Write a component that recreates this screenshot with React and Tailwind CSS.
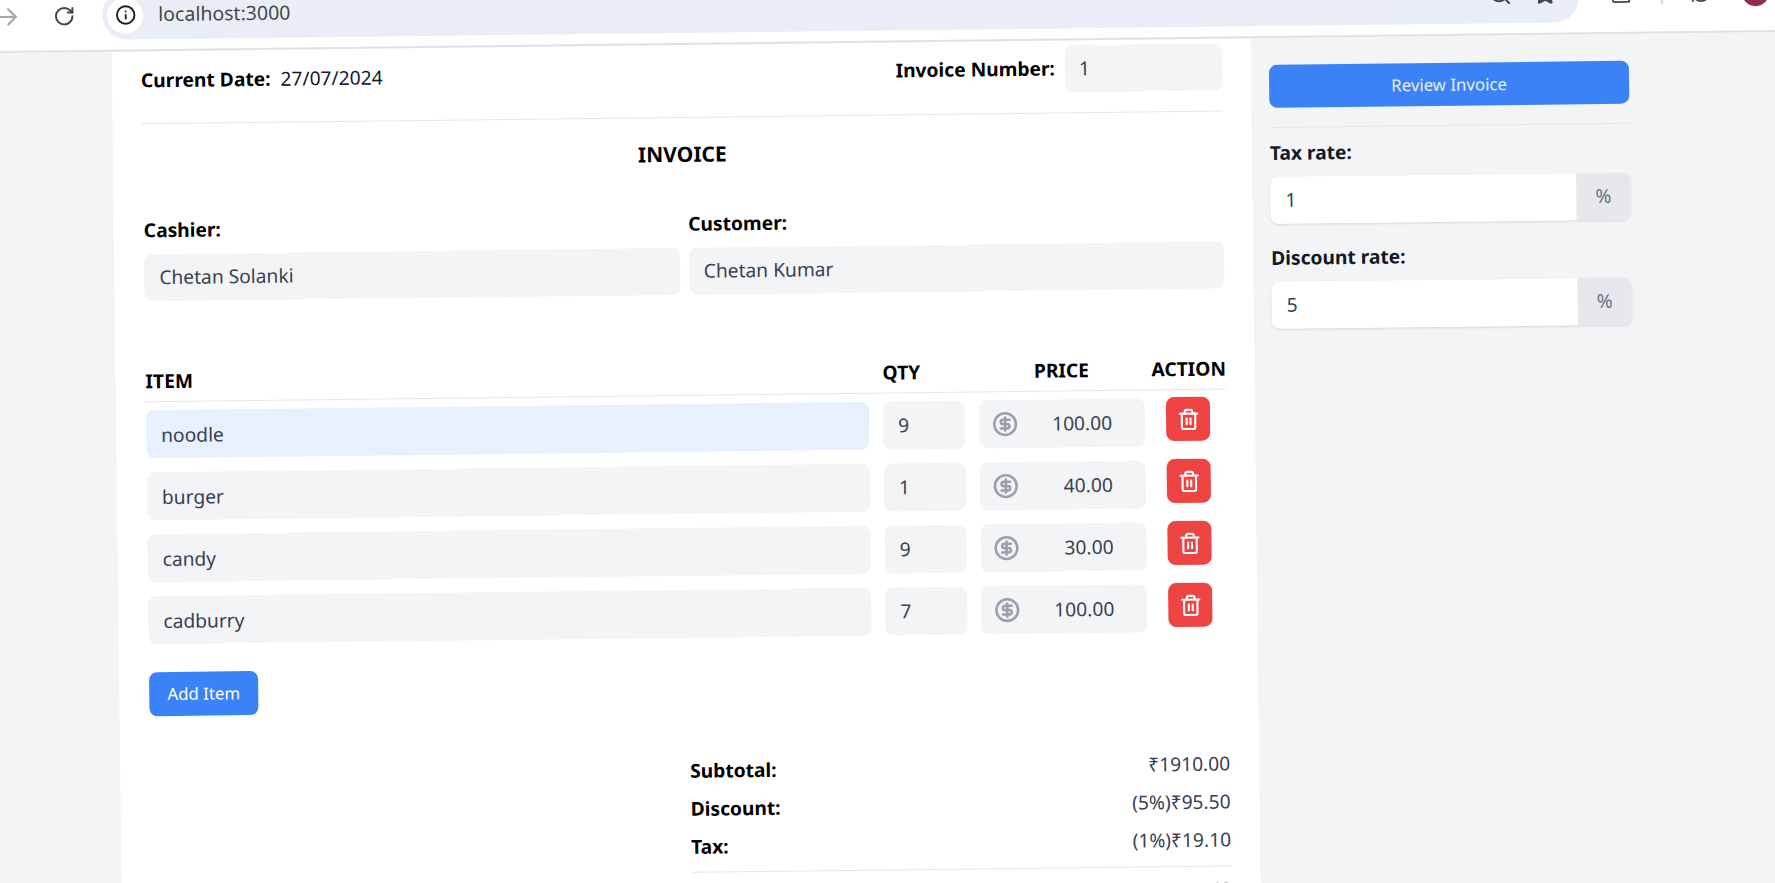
import React from 'react';
import { ArrowRight, RotateCw, Info, Search, Star, Square, RefreshCw, Trash2, CircleDollarSign } from 'lucide-react';

const items = [
    { name: 'noodle', qty: 9, price: '100.00', active: true },
    { name: 'burger', qty: 1, price: '40.00' },
    { name: 'candy', qty: 9, price: '30.00' },
    { name: 'cadburry', qty: 7, price: '100.00' },
];

const Toolbar = () => (
    <div className="h-[53px] bg-white border-b-2 border-[#dfe1e5] flex items-start pl-10 relative">
        <ArrowRight size={26} strokeWidth={2} className="text-[#a8a8a8] mt-[4px] -ml-[5px]" />
        <RotateCw size={22} strokeWidth={2.2} className="text-[#474747] mt-[6px] ml-[32px]" />
        <div className="ml-[27px] w-[1477px] h-[50px] -mt-[9px] bg-[#e9edf6] rounded-[25px] flex items-center pl-[5px]">
            <div className="w-9 h-9 rounded-full bg-white flex items-center justify-center mt-[1px]">
                <Info size={21} strokeWidth={2.2} className="text-[#1f1f1f]" />
            </div>
            <span className="ml-[15px] text-[19.5px] text-[#474747]">localhost:3000</span>
        </div>
        <div className="absolute left-[1528px] top-[-2px] h-[26px] flex items-end text-[#474747]">
            <Search size={24} strokeWidth={2} />
            <Star size={24} fill="currentColor" className="ml-[21px]" />
            <Square size={22} strokeWidth={2} className="ml-[53px]" />
            <div className="w-[2px] h-6 bg-[#c7d7f5] ml-[29px]" />
            <RefreshCw size={22} strokeWidth={2} className="ml-[27px]" />
            <div className="w-[27px] h-[27px] rounded-full bg-[#8e2a4c] ml-[30px] -mb-[3px]" />
        </div>
    </div>
);

const LabelInput = ({ label, value }) => (
    <div>
        <div className="text-[19.2px] leading-[27px] font-bold text-black">{label}</div>
        <div className="mt-[11px] h-[47px] rounded-[8px] bg-gray-100 px-[15px] flex items-center text-[19.2px] text-gray-700">{value}</div>
    </div>
);

const RateInput = ({ label, value, className }) => (
    <div className={className}>
        <div className="text-[19.2px] leading-[27px] font-bold text-[#111827]">{label}</div>
        <div className="mt-[11px] flex h-[47px] rounded-[8px] shadow-sm">
            <div className="flex-1 bg-white rounded-l-[8px] px-[15px] flex items-center text-[19.2px] text-gray-700">{value}</div>
            <div className="w-[54px] bg-gray-200 rounded-r-[8px] flex items-center justify-center text-[19.2px] text-gray-500">%</div>
        </div>
    </div>
);

const SummaryRow = ({ label, value, className = '' }) => (
    <div className={`flex justify-between items-center leading-[27px] text-[19.2px] ${className}`}>
        <span className="font-bold text-black">{label}</span>
        <span className="text-gray-700 -mt-[2px]">{value}</span>
    </div>
);

const App = () => {
    return (
        <div className="w-full h-[883px] overflow-hidden bg-gray-100" style={{ fontFamily: '"Noto Sans", "Open Sans", sans-serif' }}>
            <div className="w-[1900px] -ml-10 rotate-[-0.68deg] origin-[40px_0px]">
                <Toolbar />
                <div className="flex pl-[151px] gap-[18px]">
                    {/* Invoice card */}
                    <div className="w-[1139px] bg-white px-[29px] pt-[5px] pb-10">
                        <div className="flex items-center justify-between h-[46px]">
                            <div className="flex items-center gap-[10px] text-[19.2px] mt-[2px]">
                                <span className="font-bold text-black">Current Date:</span>
                                <span className="text-[#111827]">27/07/2024</span>
                            </div>
                            <div className="flex items-center gap-[10px] text-[19.2px]">
                                <span className="font-bold text-black">Invoice Number:</span>
                                <div className="w-[157px] h-[47px] rounded-[8px] bg-gray-100 px-[14px] flex items-center text-gray-700">1</div>
                            </div>
                        </div>
                        <div className="mt-[21px] border-t border-gray-200" />

                        <h1 className="mt-[22px] text-[21px] leading-[28px] font-bold text-black text-center">INVOICE</h1>

                        <div className="mt-[42px] pl-[1px] grid grid-cols-2 gap-x-[9px]">
                            <LabelInput label="Cashier:" value="Chetan Solanki" />
                            <LabelInput label="Customer:" value="Chetan Kumar" />
                        </div>

                        <div className="mt-[66px] grid grid-cols-[738px_96px_173px_72px] pb-[7px] border-b border-gray-200 text-[19.2px] leading-[27px] font-bold text-black">
                            <div className="pl-[1px]">ITEM</div>
                            <div>QTY</div>
                            <div className="pr-[7px] text-center">PRICE</div>
                            <div className="text-center">ACTION</div>
                        </div>

                        <div className="mt-[8px] flex flex-col gap-[14px]">
                            {items.map((item, idx) => (
                                <div key={idx} className="grid grid-cols-[738px_96px_173px_72px] text-[19.2px] text-gray-700">
                                    <div className="pl-[1px] pr-[14px]">
                                        <div className={`h-[48px] rounded-[8px] px-[15px] pt-[2px] flex items-center ${item.active ? 'bg-[#e8f0fd]' : 'bg-gray-100'}`}>{item.name}</div>
                                    </div>
                                    <div className="pr-[14px]">
                                        <div className="h-[48px] rounded-[8px] bg-gray-100 px-[15px] flex items-center">{item.qty}</div>
                                    </div>
                                    <div className="pr-[7px]">
                                        <div className="h-[48px] rounded-[8px] bg-gray-100 pl-[13px] pr-[33px] flex items-center justify-between">
                                            <CircleDollarSign size={26} strokeWidth={2.4} className="text-gray-400" />
                                            <span>{item.price}</span>
                                        </div>
                                    </div>
                                    <div className="flex justify-center">
                                        <button className="w-[44px] h-[44px] -mt-[1px] rounded-[8px] bg-[#ef4444] text-white flex items-center justify-center">
                                            <Trash2 size={23} strokeWidth={2.2} />
                                        </button>
                                    </div>
                                </div>
                            ))}
                        </div>

                        <button className="mt-[28px] ml-[1px] w-[109px] h-[44px] rounded-[8px] bg-[#3b82f6] text-white text-[16.8px]">Add Item</button>

                        <div className="mt-[47px] ml-auto w-[540px] flex flex-col gap-[11px]">
                            <SummaryRow label="Subtotal:" value="₹1910.00" />
                            <SummaryRow label="Discount:" value="(5%)₹95.50" />
                            <SummaryRow label="Tax:" value="(1%)₹19.10" />
                            <div className="mt-[1px] border-t border-gray-200" />
                            <SummaryRow label="Total:" value="₹1833.60" className="-mt-[1px]" />
                        </div>
                    </div>

                    {/* Settings sidebar */}
                    <div className="w-[360px] pt-[27px]">
                        <button className="w-full h-[43px] rounded-[8px] bg-[#3b82f6] text-[#e6effe] text-[16.8px]">Review Invoice</button>
                        <div className="mt-[19px] border-t border-gray-200" />
                        <RateInput className="mt-[11px]" label="Tax rate:" value="1" />
                        <RateInput className="mt-[20px]" label="Discount rate:" value="5" />
                    </div>
                </div>
            </div>
        </div>
    );
};

export default App;
